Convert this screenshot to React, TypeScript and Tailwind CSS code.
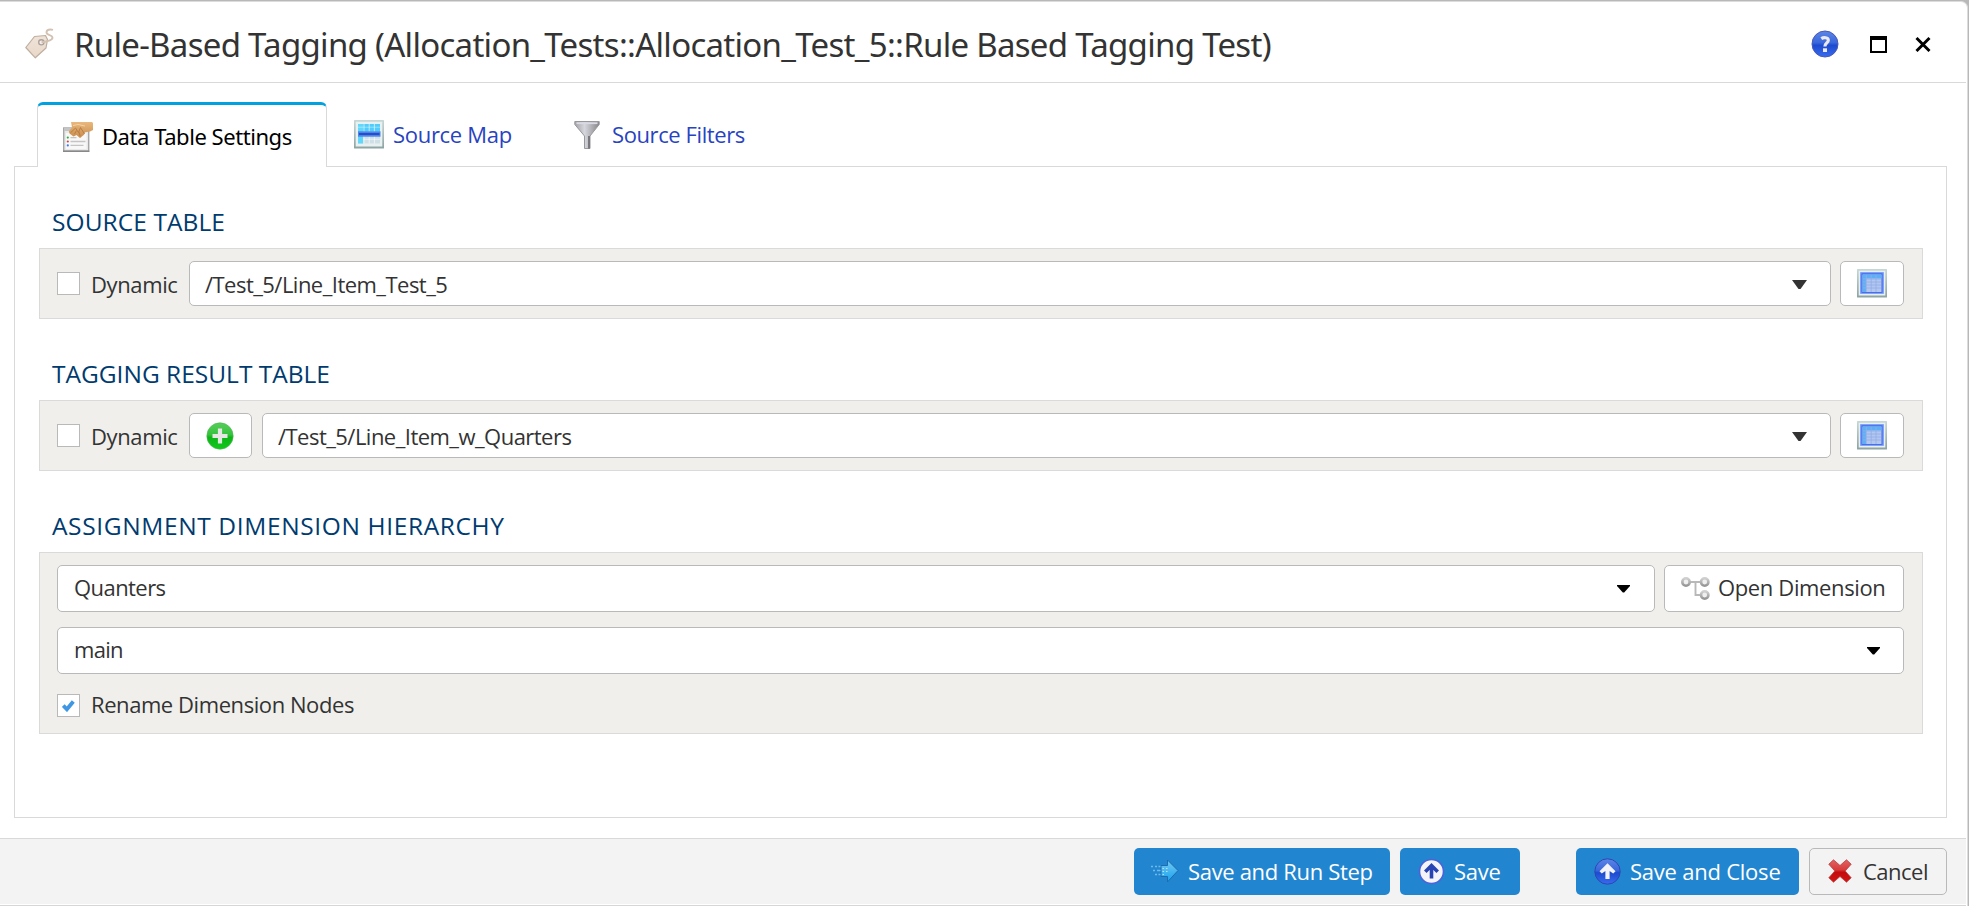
import type { ReactNode } from "react";

function TagIcon() {
  return (
    <svg className="ml-[25px] h-[31px] w-[29px] shrink-0" viewBox="0 0 29 31">
      <defs>
        <linearGradient id="tag" x1="0" y1="0" x2="0" y2="1">
          <stop offset="0" stopColor="#efe3d8" />
          <stop offset="1" stopColor="#e8d8c9" />
        </linearGradient>
      </defs>
      <path d="M9.500 8.500 20.500 7.500l2 4-1.500 8.500L10.300 29.800.800 19.500z" fill="url(#tag)" stroke="#bfae9f" strokeWidth="1.200" strokeLinejoin="round" />
      <circle cx="16.300" cy="14.300" r="2.600" fill="#f6efe9" stroke="#aba29b" strokeWidth="1.400" />
      <path d="M16.500 14.300C20 14 27.500 12.500 27.500 9.700 27.500 6.800 21.500 7.500 21.500 4.500 21.500 1.500 25 1 28 1.800" fill="none" stroke="#d3c2b3" strokeWidth="1.900" />
    </svg>
  );
}

function HelpIcon() {
  return (
    <svg className="h-[28px] w-[28px]" viewBox="0 0 28 28">
      <defs>
        <linearGradient id="help" x1="0" y1="0" x2="0" y2="1">
          <stop offset="0" stopColor="#5d85e6" />
          <stop offset="0.450" stopColor="#3a68dc" />
          <stop offset="0.550" stopColor="#1d4bd0" />
          <stop offset="1" stopColor="#3a6bee" />
        </linearGradient>
      </defs>
      <circle cx="14" cy="14" r="13" fill="url(#help)" stroke="#4a58b4" strokeWidth="1" />
      <path d="M10.300 8.600C12.500 7.200 17.300 7.100 17.300 10.300 17.300 13 13.900 13 13.900 16.600" fill="none" stroke="#e9e9ee" strokeWidth="3.200" />
      <rect x="12" y="18.300" width="4" height="3.700" fill="#e9e9ee" />
    </svg>
  );
}

function SettingsIcon() {
  return (
    <svg className="h-[30px] w-[30px] shrink-0" viewBox="0 0 30 30">
      <defs>
        <linearGradient id="hand" x1="0" y1="0" x2="0" y2="1">
          <stop offset="0" stopColor="#e9b87c" />
          <stop offset="1" stopColor="#c98b4c" />
        </linearGradient>
      </defs>
      <rect x="0.700" y="6" width="25" height="23.300" fill="#e9e9e9" stroke="#a6a6a6" strokeWidth="1.400" />
      <path d="M1 6h24v3H1z" fill="#c2c4c6" />
      <path d="M3 11h20.500v16H3z" fill="#f8f8f8" />
      <path d="M0 29.200h26.300" stroke="#858585" strokeWidth="1.400" />
      <circle cx="4.800" cy="15.600" r="1.100" fill="#27b03a" />
      <circle cx="4.800" cy="19.500" r="1.100" fill="#c8424a" />
      <circle cx="4.800" cy="23.400" r="1.100" fill="#3c78f0" />
      <path d="M7.500 15.600h6M7.500 19.500h15M7.500 23.400h13" stroke="#c4c4c4" strokeWidth="1.300" />
      <path d="M8 0H29l1 1v7l-3 1.500-5 .8-1 2.500-4 3.200-3.500-3-3 1.500-4-3L5.800 9.500 9 5.500z" fill="url(#hand)" />
      <path d="M7.500 10.800l5-4.800 3 4.500 2-5 4 6.500M11.500 12l2-3.500M17 14l-1-4" stroke="#b37a42" strokeWidth="0.900" fill="none" />
      <path d="M10 3.500l5-1 7 1.500" stroke="#f4d3a5" strokeWidth="1" fill="none" />
    </svg>
  );
}

function Frame({ id }: { id: string }) {
  return (
    <>
      <defs>
        <linearGradient id={id} x1="0" y1="0" x2="0" y2="1">
          <stop offset="0" stopColor="#c6d8d5" />
          <stop offset="1" stopColor="#8ca3a2" />
        </linearGradient>
      </defs>
      <rect width="30" height="28.500" rx="0.600" fill={`url(#${id})`} />
      <rect x="1.700" y="1.700" width="26.600" height="24.800" fill="#e8f0f2" />
    </>
  );
}

function SourceMapIcon() {
  return (
    <svg className="h-[29px] w-[30px] shrink-0" viewBox="0 0 30 29">
      <Frame id="mapFrame" />
      <rect x="4" y="4" width="22" height="19.500" fill="#cfdfe6" />
      <path d="M4 4h22v7.500H4z" fill="#4fcdfb" />
      <path d="M4 4h5v19.500H4z" fill="#5fd8fc" />
      <path d="M10 4v19.500M15.200 4v19.500M20.400 4v19.500M9 19.200h17" stroke="#fff" strokeOpacity="0.600" strokeWidth="1" />
      <path d="M4 7.200h22" stroke="#fff" strokeOpacity="0.400" strokeWidth="1" />
      <rect x="4" y="11.300" width="22.500" height="5.400" fill="#4a86ea" />
      <path d="M5 14h20.500" stroke="#2a44c0" strokeWidth="1.800" />
    </svg>
  );
}

function FunnelIcon() {
  return (
    <svg className="h-[29px] w-[26px] shrink-0" viewBox="0 0 26 29">
      <defs>
        <linearGradient id="funnel" x1="0" y1="0" x2="1" y2="0">
          <stop offset="0" stopColor="#a2a2a6" />
          <stop offset="0.400" stopColor="#d6d6de" />
          <stop offset="1" stopColor="#858589" />
        </linearGradient>
      </defs>
      <path d="M.8 1.500h24.400v3L16 16v12.500h-5.500V16L.8 4.500z" fill="url(#funnel)" stroke="#98989b" strokeWidth="1" />
      <path d="M2.500 3.200h21" stroke="#d9d9e4" strokeWidth="1.800" />
      <path d="M15 16v12.500" stroke="#727276" strokeWidth="1.800" />
    </svg>
  );
}

function TableIcon() {
  return (
    <svg className="h-[29px] w-[30px]" viewBox="0 0 30 29">
      <Frame id="tableFrame" />
      <rect x="3.200" y="3.200" width="23.600" height="21.600" fill="#6a90fa" />
      <rect x="4.600" y="4.400" width="20.800" height="19.400" fill="#4166e4" />
      <rect x="5.500" y="5.500" width="19" height="17.500" fill="#b3c6ee" />
      <path d="M5.500 5.500h19V9.500h-19zM5.500 5.500h3.500V23H5.500z" fill="#5eb0f6" />
      <path d="M9.300 6v17M14.200 6v17M19 6v17M6 10h18M6 13h18M6 16h18M6 19h18" stroke="#90adea" strokeWidth="0.800" />
    </svg>
  );
}

function PlusIcon() {
  return (
    <svg className="mr-px h-[28px] w-[28px]" viewBox="0 0 28 28">
      <defs>
        <linearGradient id="plus" x1="0" y1="0" x2="0" y2="1">
          <stop offset="0" stopColor="#56cd5a" />
          <stop offset="0.450" stopColor="#36c33c" />
          <stop offset="0.550" stopColor="#0cb516" />
          <stop offset="1" stopColor="#12c91c" />
        </linearGradient>
      </defs>
      <circle cx="14" cy="14" r="13.200" fill="url(#plus)" stroke="#4fb554" strokeWidth="0.600" />
      <path d="M14 6.500v15M6.500 14h15" stroke="#e6e6e6" strokeWidth="4.200" />
    </svg>
  );
}

function HierarchyIcon() {
  return (
    <svg className="h-[25px] w-[29px] shrink-0" viewBox="0 0 29 25">
      <defs>
        <linearGradient id="node" x1="0" y1="0" x2="0" y2="1">
          <stop offset="0" stopColor="#d0d0d0" />
          <stop offset="1" stopColor="#969696" />
        </linearGradient>
      </defs>
      <path d="M9 6h11M14.500 6v13H20" fill="none" stroke="#b8b8b8" strokeWidth="1.900" />
      <circle cx="5" cy="6" r="3.700" fill="#efefef" stroke="url(#node)" strokeWidth="2.600" />
      <circle cx="23.700" cy="6" r="3.700" fill="#efefef" stroke="url(#node)" strokeWidth="2.600" />
      <circle cx="23.700" cy="19" r="3.700" fill="#efefef" stroke="url(#node)" strokeWidth="2.600" />
    </svg>
  );
}

function RunIcon() {
  return (
    <svg className="h-[24px] w-[29px] shrink-0" viewBox="0 0 29 24">
      <defs>
        <linearGradient id="run" x1="0" y1="0" x2="0" y2="1">
          <stop offset="0" stopColor="#76c8f2" />
          <stop offset="0.500" stopColor="#47b6f0" />
          <stop offset="1" stopColor="#17a0ee" />
        </linearGradient>
      </defs>
      <path d="M11 6.500h6.500V1L28 11.500 17.500 23v-5.500H11z" fill="url(#run)" stroke="#1c6cae" strokeWidth="1" />
      <path d="M1 7.500h2M5 7.500h2M8.500 7.500h2M3 11.500h2M7 11.500h3.500M5 15.500h2M8.500 15.500h2" stroke="#6bbcec" strokeWidth="1.700" />
      <path d="M12.500 9.500h1.500M16 9.500h1.500M12.500 12.500h1.500M16 12.500h1.500M12.500 15.500h1.500" stroke="#b5e2f8" strokeWidth="1.200" />
    </svg>
  );
}

function SaveIcon() {
  return (
    <svg className="h-[27px] w-[27px] shrink-0" viewBox="0 0 27 27">
      <circle cx="13.500" cy="13.500" r="12" fill="#f3f3f8" stroke="#4a62dc" strokeWidth="1.600" />
      <path d="M13.500 20.500V8.500M7.300 13.800l6.200-6.200 6.200 6.200" fill="none" stroke="#2743b4" strokeWidth="3.600" />
    </svg>
  );
}

function SaveCloseIcon() {
  return (
    <svg className="h-[27px] w-[27px] shrink-0" viewBox="0 0 27 27">
      <circle cx="13.500" cy="13.500" r="12.700" fill="url(#help)" stroke="#2c47b4" strokeWidth="1" />
      <path d="M13.500 5.200l8 8-2.300 2.300-3.600-2.600v8h-4.200v-8l-3.600 2.600-2.300-2.300z" fill="#f3f3f7" />
    </svg>
  );
}

function CancelIcon() {
  return (
    <svg className="h-[24px] w-[24px] shrink-0" viewBox="0 0 24 24">
      <defs>
        <linearGradient id="cancel" x1="0" y1="0" x2="0" y2="1">
          <stop offset="0" stopColor="#e06464" />
          <stop offset="0.450" stopColor="#d83a3a" />
          <stop offset="0.550" stopColor="#c40c0c" />
          <stop offset="1" stopColor="#d21414" />
        </linearGradient>
      </defs>
      <path d="M5.500.8 12 6.500 18.500.8l4.700 4.400-6 6.800 6 6.800-4.700 4.400L12 17.500l-6.500 5.700-4.700-4.400 6-6.800-6-6.800z" fill="url(#cancel)" stroke="#b84040" strokeWidth="0.800" strokeLinejoin="round" />
    </svg>
  );
}

function Caret({ large }: { large?: boolean }) {
  return large ? (
    <svg className="mt-[2px] h-[9px] w-[15px] shrink-0" viewBox="0 0 15 9">
      <path d="M0 0h15L8.500 9h-2z" fill="#333" />
    </svg>
  ) : (
    <svg className="mt-px h-[8px] w-[13px] shrink-0" viewBox="0 0 13 8">
      <path d="M0 0h13v1L7.200 7.500H5.800L0 1z" fill="#000" />
    </svg>
  );
}

function Checkbox({ checked }: { checked?: boolean }) {
  return (
    <span className="flex h-[23px] w-[23px] shrink-0 items-center justify-center border border-[#b9b9b9] bg-white">
      {checked && (
        <svg className="h-[12px] w-[13px]" viewBox="0 0 13 12">
          <path d="M1.300 5.600l3.600 3.700L11.300 1.500" fill="none" stroke="#3f97e4" strokeWidth="3.800" />
        </svg>
      )}
    </span>
  );
}

function Heading({ children, className }: { children: ReactNode; className: string }) {
  return <h2 className={`ml-[13px] whitespace-nowrap text-[24.5px] leading-[34px] text-[#003b6f] ${className}`}>{children}</h2>;
}

const box = "rounded-[5px] border border-[#b9b9b9] bg-white";
const section = "border border-[#dadada] bg-[#f0efeb]";

export default function App() {
  return (
    <div className="flex h-[906px] w-full flex-col overflow-hidden bg-[#b8b8b8] pt-px pr-px font-['Open_Sans',sans-serif] text-[22px] leading-[30px] text-[#333]">
      <div className="flex flex-1 flex-col rounded-tr-[7px] border-t border-r border-[#dcdcdc] bg-white pr-px">
        <header className="flex h-[81px] shrink-0 items-center border-b border-[#d9d9d9] pt-[3px]">
          <TagIcon />
          <h1 className="ml-[20px] flex-1 whitespace-nowrap pt-[2px] font-['Noto_Sans',sans-serif] text-[33px] leading-[44px] tracking-[-0.71px]">
            Rule-Based Tagging (Allocation_Tests::Allocation_Test_5::Rule Based Tagging Test)
          </h1>
          <button className="mr-[31px]"><HelpIcon /></button>
          <button className="mr-[28px] mt-px h-[17px] w-[17px] border-2 border-t-4 border-black bg-white" />
          <button className="mr-[35px] pt-px">
            <svg className="h-[15px] w-[16px]" viewBox="0 0 16 15">
              <path d="M1.500 1l13 13M14.500 1l-13 13" stroke="#000" strokeWidth="2.900" />
            </svg>
          </button>
        </header>

        <main className="ml-[14px] flex w-[1933px] flex-col pt-[19px]">
          <nav className="relative -mb-px flex h-[65px] pl-[23px]">
            <div className="flex w-[290px] items-center rounded-t-[6px] border-x border-t-[3px] border-x-[#d9d9d9] border-t-[#00a1e0] bg-white pt-[1px] pl-[25px] text-black">
              <SettingsIcon />
              <span className="ml-[9px] whitespace-nowrap pb-[2px] font-['Noto_Sans',sans-serif] tracking-[-0.45px]">Data Table Settings</span>
            </div>
            <div className="flex items-center pl-[27px] text-[#2843c2]">
              <SourceMapIcon />
              <span className="ml-[9px] w-[118px] whitespace-nowrap pb-[2px] tracking-[-0.3px]">Source Map</span>
            </div>
            <div className="flex items-center pl-[63px] text-[#2843c2]">
              <FunnelIcon />
              <span className="ml-[12px] whitespace-nowrap pb-[2px] tracking-[-0.4px]">Source Filters</span>
            </div>
          </nav>

          <div className="flex h-[652px] flex-col border border-[#d9d9d9] pr-[23px] pl-[24px]">
            <Heading className="mt-[38px] tracking-[0.08px]">SOURCE TABLE</Heading>
            <div className={`mt-[9px] flex h-[71px] shrink-0 items-center pr-[18px] pl-[17px] ${section}`}>
              <Checkbox />
              <span className="ml-[11px] w-[98px] whitespace-nowrap pt-px tracking-[-0.38px]">Dynamic</span>
              <div className={`flex h-[45px] flex-1 items-center justify-between pr-[23px] pl-[15px] ${box}`}>
                <span className="whitespace-nowrap pt-px tracking-[-0.53px]">/Test_5/Line_Item_Test_5</span>
                <Caret large />
              </div>
              <button className={`ml-[9px] flex h-[45px] w-[64px] items-center justify-center ${box}`}><TableIcon /></button>
            </div>

            <Heading className="mt-[38px] tracking-[0px]">TAGGING RESULT TABLE</Heading>
            <div className={`mt-[9px] flex h-[71px] shrink-0 items-center pr-[18px] pl-[17px] ${section}`}>
              <Checkbox />
              <span className="ml-[11px] w-[98px] whitespace-nowrap pt-px tracking-[-0.38px]">Dynamic</span>
              <button className={`flex h-[45px] w-[63px] items-center justify-center ${box}`}><PlusIcon /></button>
              <div className={`ml-[10px] flex h-[45px] flex-1 items-center justify-between pr-[23px] pl-[15px] ${box}`}>
                <span className="whitespace-nowrap pt-px tracking-[-0.53px]">/Test_5/Line_Item_w_Quarters</span>
                <Caret large />
              </div>
              <button className={`ml-[9px] flex h-[45px] w-[64px] items-center justify-center ${box}`}><TableIcon /></button>
            </div>

            <Heading className="mt-[38px] tracking-[0.63px]">ASSIGNMENT DIMENSION HIERARCHY</Heading>
            <div className={`mt-[9px] flex h-[182px] shrink-0 flex-col pt-[12px] pr-[18px] pl-[17px] ${section}`}>
              <div className="flex">
                <div className={`flex h-[47px] flex-1 items-center justify-between pr-[24px] pl-[16px] ${box}`}>
                  <span className="whitespace-nowrap pb-[3px] tracking-[-0.56px]">Quanters</span>
                  <Caret />
                </div>
                <button className={`ml-[9px] flex h-[47px] w-[240px] items-center pl-[16px] ${box}`}>
                  <HierarchyIcon />
                  <span className="ml-[8px] whitespace-nowrap pb-[3px] tracking-[-0.37px]">Open Dimension</span>
                </button>
              </div>
              <div className={`mt-[15px] flex h-[47px] items-center justify-between pr-[23px] pl-[16px] ${box}`}>
                <span className="whitespace-nowrap pb-[4px] tracking-[-0.7px]">main</span>
                <Caret />
              </div>
              <div className="mt-[15px] flex items-center">
                <Checkbox checked />
                <span className="ml-[11px] whitespace-nowrap pb-[3px] tracking-[-0.43px]">Rename Dimension Nodes</span>
              </div>
            </div>
          </div>
        </main>

        <footer className="mt-[20px] flex h-[66px] shrink-0 items-center border-t border-[#d9d9d9] bg-[#f3f3f3] pr-[19px] pb-px">
          <button className="ml-auto flex h-[47px] w-[256px] items-center rounded-[5px] bg-[#2285d0] pl-[16px] text-white">
            <RunIcon />
            <span className="ml-[9px] whitespace-nowrap tracking-[-0.33px]">Save and Run Step</span>
          </button>
          <button className="ml-[10px] flex h-[47px] w-[120px] items-center rounded-[5px] bg-[#2285d0] pl-[18px] text-white">
            <SaveIcon />
            <span className="ml-[9px] whitespace-nowrap tracking-[-0.28px]">Save</span>
          </button>
          <button className="ml-[56px] flex h-[47px] w-[223px] items-center rounded-[5px] bg-[#2285d0] pl-[18px] text-white">
            <SaveCloseIcon />
            <span className="ml-[9px] whitespace-nowrap tracking-[-0.23px]">Save and Close</span>
          </button>
          <button className="ml-[10px] flex h-[47px] w-[138px] items-center rounded-[5px] border border-[#b9b9b9] pl-[18px]">
            <CancelIcon />
            <span className="ml-[11px] whitespace-nowrap tracking-[-0.5px]">Cancel</span>
          </button>
        </footer>
        <div className="mt-px h-px shrink-0 bg-[#d6d6d6]" />
      </div>
    </div>
  );
}
